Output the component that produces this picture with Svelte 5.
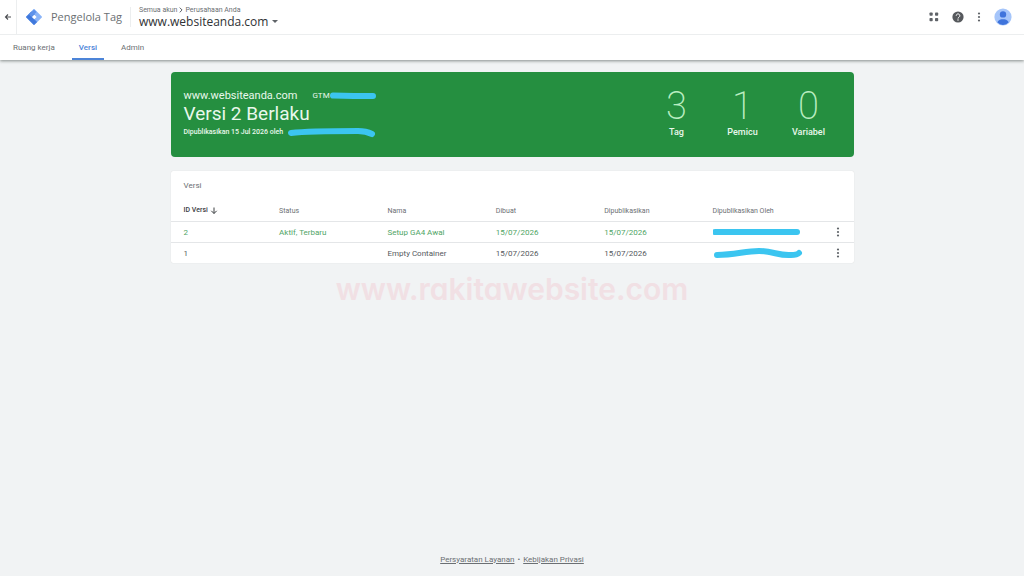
<script>
	const site = 'www.websiteanda.com';

	const tabs = [
		{ label: 'Ruang kerja', href: '#ruang-kerja' },
		{ label: 'Versi', href: '#versi' },
		{ label: 'Admin', href: '#admin' }
	];
	let current = $state('Versi');

	const stats = [
		{ value: 3, label: 'Tag' },
		{ value: 1, label: 'Pemicu' },
		{ value: 0, label: 'Variabel' }
	];

	// mark = the marker stroke that hides the account
	const versions = [
		{ id: 2, status: 'Aktif, Terbaru', name: 'Setup GA4 Awal', created: '15/07/2026', published: '15/07/2026', live: true, mark: 'M2 6H84' },
		{ id: 1, status: '', name: 'Empty Container', created: '15/07/2026', published: '15/07/2026', live: false, mark: 'M4 8C22 8 32 4 46 4S66 9 78 8Q84 8 86 6' }
	];
</script>

{#snippet kebab()}
	<svg viewBox="0 0 4 12" width="4" height="12" fill="#5f6368" aria-hidden="true">
		<circle cx="2" cy="2.5" r="1.1" />
		<circle cx="2" cy="6" r="1.1" />
		<circle cx="2" cy="9.5" r="1.1" />
	</svg>
{/snippet}

<div class="page">
	<header>
		<div class="topbar">
			<button class="back" aria-label="Kembali">
				<svg viewBox="0 0 8 8" width="8" height="8" fill="none" stroke="#4a4d51" stroke-width="1.1"><path d="M7 4H1.5M4 1.5 1.5 4 4 6.5" /></svg>
			</button>
			<svg class="logo" viewBox="0 0 18 18" width="18" height="18" aria-hidden="true">
				<path fill="#8ab4f8" d="M9 1.8 16.2 9 9 16.2 1.8 9z" stroke="#8ab4f8" stroke-width="1.6" stroke-linejoin="round" />
				<path fill="#3f78dc" d="M6.5 4 1.5 9 9 16.5l2.5-2.5-5-5 2.7-2.7z" stroke="#3f78dc" stroke-linejoin="round" />
				<path fill="#5e92ea" d="M9 1.5 11.5 4 6.5 9 4 6.5z" />
				<path fill="#fff" d="m9.3 6.7 2.3 2.3-2.3 2.3L7 9z" />
			</svg>
			<span class="product">Pengelola Tag</span>
			<div class="account">
				<div class="crumbs">
					Semua akun
					<svg viewBox="0 0 4 6" width="4" height="6" fill="none" stroke="#5f6368"><path d="M.7.6 3.1 3 .7 5.4" /></svg>
					Perusahaan Anda
				</div>
				<button class="container">
					{site}
					<svg viewBox="0 0 6 3" width="6" height="3" fill="#5f6368"><path d="M0 0h6L3 3z" /></svg>
				</button>
			</div>
			<div class="tools">
				<button aria-label="Aplikasi">
					<svg viewBox="0 0 10 10" width="10" height="10" fill="#5f6368">
						<rect x=".5" y=".5" width="3.2" height="3.2" rx=".8" />
						<rect x="6" y=".5" width="3.2" height="3.2" rx=".8" />
						<rect x=".5" y="6" width="3.2" height="3.2" rx=".8" />
						<rect x="6" y="6" width="3.2" height="3.2" rx=".8" />
					</svg>
				</button>
				<button aria-label="Bantuan">
					<svg viewBox="0 0 12 12" width="12" height="12">
						<circle cx="6" cy="6" r="5.6" fill="#56595d" />
						<path d="M4.2 4.7a1.8 1.8 0 1 1 2.8 1.5Q6 6.8 6 7.5" fill="none" stroke="#fff" stroke-width="1" />
						<circle cx="6" cy="9" r=".7" fill="#fff" />
					</svg>
				</button>
				<button aria-label="Lainnya">{@render kebab()}</button>
				<button aria-label="Akun">
					<svg viewBox="0 0 18 18" width="18" height="18">
						<circle cx="9" cy="9" r="8.6" fill="#a5c5fa" />
						<circle cx="9" cy="6.4" r="3.2" fill="#3f74dc" />
						<path d="M3.3 14.2C4.5 11.5 7 11.2 9 11.2s4.5.3 5.7 3A8.6 8.6 0 0 1 9 17a8.6 8.6 0 0 1-5.7-2.8z" fill="#3f74dc" />
					</svg>
				</button>
			</div>
		</div>
		<nav>
			{#each tabs as tab}
				<a
					href={tab.href}
					class:active={current === tab.label}
					aria-current={current === tab.label ? 'page' : undefined}
					onclick={() => (current = tab.label)}>{tab.label}</a>
			{/each}
		</nav>
	</header>

	<main>
		<section class="banner">
			<div class="summary">
				<div class="site">
					<span>{site}</span>
					<span class="gtm">GTM<svg viewBox="0 0 48 8" width="48" height="8"><path class="mark" d="M3 3.5 24 4H43" /></svg></span>
				</div>
				<h1>Versi 2 Berlaku</h1>
				<p>Dipublikasikan 15 Jul 2026 oleh<svg viewBox="0 0 90 10" width="90" height="10"><path class="mark" d="M3 5C20 3 50 3 70 3Q78 3 84 6" /></svg></p>
			</div>
			<dl class="stats">
				{#each stats as stat}
					<div>
						<dd>{stat.value}</dd>
						<dt>{stat.label}</dt>
					</div>
				{/each}
			</dl>
		</section>

		<section class="card">
			<h2>Versi</h2>
			<table>
				<thead>
					<tr>
						<th class="id">
							ID Versi
							<svg viewBox="0 0 8 8" width="8" height="8" fill="none" stroke="#3c4043"><path d="M4 .5v6M1.3 3.8 4 6.500l2.7-2.7" /></svg>
						</th>
						<th>Status</th>
						<th>Nama</th>
						<th>Dibuat</th>
						<th>Dipublikasikan</th>
						<th class="by">Dipublikasikan Oleh</th>
						<th class="more"></th>
					</tr>
				</thead>
				<tbody>
					{#each versions as version}
						<tr class:live={version.live}>
							<td>{version.id}</td>
							<td>{version.status}</td>
							<td>{version.name}</td>
							<td>{version.created}</td>
							<td>{version.published}</td>
							<td class="by"><svg viewBox="0 0 90 12" width="90" height="12"><path class="mark" d={version.mark} /></svg></td>
							<td class="more"><button aria-label="Tindakan versi {version.id}">{@render kebab()}</button></td>
						</tr>
					{/each}
				</tbody>
			</table>
		</section>
	</main>

	<div class="watermark">www.rakitawebsite.com</div>

	<footer>
		<a href="#persyaratan">Persyaratan Layanan</a>
		<span>•</span>
		<a href="#privasi">Kebijakan Privasi</a>
	</footer>
</div>

<style>
	:global(body) {
		margin: 0;
		background: #f1f3f4;
	}
	.page {
		display: flex;
		flex-direction: column;
		min-height: 100vh;
		font-family: Roboto, "Liberation Sans", sans-serif;
		font-size: 8px;
		color: #6b6f73;
	}
	button {
		display: flex;
		align-items: center;
		padding: 0;
		border: 0;
		background: none;
		font: inherit;
		color: inherit;
		cursor: pointer;
	}
	svg {
		display: block;
		flex: none;
	}

	header {
		background: #fff;
		box-shadow: 0 1px 3px rgba(60,70,67,0.6);
	}
	.topbar {
		display: flex;
		align-items: center;
		height: 34px;
		border-bottom: 1px solid #eceeef;
	}
	.back {
		justify-content: center;
		align-self: stretch;
		width: 17px;
		border-right: 1px solid #eceeef;
	}
	.logo {
		margin: 0 8px;
	}
	.product {
		padding-right: 8px;
		border-right: 1px solid #eceeef;
		font-family: "Open Sans", Roboto, sans-serif;
		font-size: 11px;
		line-height: 20px;
	}
	.account {
		padding-left: 8px;
	}
	.crumbs {
		display: flex;
		align-items: center;
		gap: 2px;
		font-size: 7px;
		line-height: 8px;
	}
	.container {
		gap: 4px;
		font-family: "Open Sans", Roboto, sans-serif;
		font-size: 12px;
		line-height: 15px;
		color: #2f3235;
	}
	.tools {
		display: flex;
		align-items: center;
		gap: 13px;
		margin-left: auto;
		padding-right: 12px;
	}
	nav {
		display: flex;
		gap: 10px;
		padding-left: 6px;
	}
	nav a {
		padding: 0 7px;
		line-height: 25px;
		color: inherit;
		text-decoration: none;
	}
	nav a.active {
		box-shadow: inset 0 -2px #4c84d8;
		font-weight: 500;
		color: #4c84d8;
	}

	main {
		width: 66.7%;
		margin: 12px auto 0;
	}
	.banner {
		display: flex;
		justify-content: space-between;
		padding: 16px 12px 16px 13px;
		border-radius: 4px;
		background: #258f40;
		color: #e9f8ec;
	}
	.site {
		display: flex;
		align-items: center;
		gap: 15px;
		font-size: 11px;
		line-height: 15px;
	}
	.gtm {
		display: flex;
		align-items: center;
		font-size: 8px;
	}
	h1 {
		margin: 0;
		font-size: 19px;
		font-weight: 400;
		line-height: 22px;
	}
	p {
		display: flex;
		align-items: center;
		gap: 5px;
		margin: 0;
		font-size: 7px;
		font-weight: 500;
		line-height: 15px;
	}
	.mark {
		fill: none;
		stroke: #3bc5f0;
		stroke-width: 6;
		stroke-linecap: round;
	}
	.stats {
		display: flex;
		margin: 0;
	}
	.stats div {
		width: 66px;
		text-align: center;
	}
	dd {
		margin: 0;
		font-size: 38px;
		font-weight: 200;
		line-height: 36px;
		color: #b9edc0;
	}
	dt {
		font-size: 9px;
		font-weight: 500;
		line-height: 17px;
	}

	.card {
		margin-top: 14px;
		border-radius: 2px;
		background: #fff;
		box-shadow: 0 0 1px rgba(60,64,67,0.2);
	}
	h2 {
		margin: 0;
		padding: 0 13px;
		font-size: 8px;
		font-weight: 400;
		line-height: 29px;
	}
	table {
		width: 100%;
		border-collapse: collapse;
		table-layout: fixed;
	}
	th {
		height: 21px;
		padding: 0;
		font-size: 7px;
		font-weight: 400;
		text-align: left;
	}
	td {
		height: 20px;
		padding: 0;
		border-top: 1px solid #e4e6e8;
		color: #55595d;
	}
	th:first-child,
	td:first-child {
		padding-left: 13px;
	}
	th.id {
		width: 14%;
		font-weight: 500;
		color: #3c4043;
	}
	.id svg {
		display: inline-block;
		vertical-align: middle;
	}
	.by {
		width: 18%;
	}
	.more {
		width: 18px;
	}
	.live td {
		color: #4fa566;
	}

	.watermark {
		margin-top: 7px;
		font-family: Inter, sans-serif;
		font-size: 30px;
		font-weight: 600;
		font-feature-settings: "cv11";
		line-height: 38px;
		text-align: center;
		color: #f1e0e4;
	}

	footer {
		display: flex;
		justify-content: center;
		gap: 3px;
		margin-top: auto;
		padding-bottom: 11px;
		line-height: 10px;
	}
	footer a {
		color: inherit;
	}
</style>
